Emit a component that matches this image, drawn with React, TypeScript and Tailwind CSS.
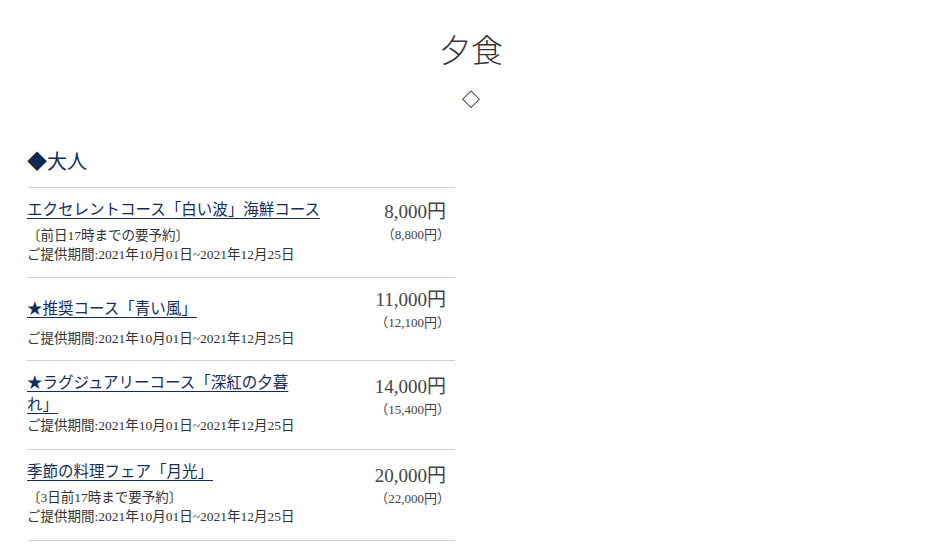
import React from "react";

type Course = {
  title: React.ReactNode;
  note?: string;
  price: string;
  taxed: string;
  pad: string;
  periodGap: string;
  priceGap: string;
};

const courses: Course[] = [
  {
    title: "エクセレントコース「白い波」海鮮コース",
    note: "〔前日17時までの要予約〕",
    price: "8,000",
    taxed: "8,800",
    pad: "pt-[11px] pb-[13px]",
    periodGap: "",
    priceGap: "mt-0",
  },
  {
    title: "★推奨コース「青い風」",
    price: "11,000",
    taxed: "12,100",
    pad: "pt-[20px] pb-[12px]",
    periodGap: "mt-[9px]",
    priceGap: "-mt-[11px]",
  },
  {
    title: (
      <>
        ★ラグジュアリーコース「深紅の夕暮
        <br />
        れ」
      </>
    ),
    price: "14,000",
    taxed: "15,400",
    pad: "pt-[11px] pb-[14px]",
    periodGap: "",
    priceGap: "mt-[2px]",
  },
  {
    title: "季節の料理フェア「月光」",
    note: "〔3日前17時まで要予約〕",
    price: "20,000",
    taxed: "22,000",
    pad: "pt-[11px] pb-[14px]",
    periodGap: "",
    priceGap: "mt-[2px]",
  },
];

const period = "ご提供期間:2021年10月01日~2021年12月25日";

export default function App() {
  return (
    <div
      className="min-h-[558px] bg-white text-[#333]"
      style={{ fontFamily: '"Liberation Serif", "Noto Sans CJK JP", serif' }}
    >
      <div className="pt-[27px] flex flex-col items-center">
        <h1 className="text-[32px] leading-[48px] font-light text-[#333]">夕食</h1>
        <div className="mt-[12px] text-[18px] leading-[27px] text-black">◇</div>
      </div>

      <div className="w-[428px] ml-[27px] mt-[33px]">
        <h2 className="text-[20px] leading-[30px] text-[#0f2a52] mb-[10px]">◆大人</h2>

        <ul className="border-b border-[#d0d0d0]">
          {courses.map((c, i) => (
            <li key={i} className={`flex justify-between border-t border-[#d0d0d0] ${c.pad}`}>
              <div className="w-[300px]">
                <div className="text-[15.5px] leading-[22px] whitespace-nowrap">
                  <a href="#" className="text-[#142c5a] underline underline-offset-[3px]">
                    {c.title}
                  </a>
                </div>
                {c.note && (
                  <p className="mt-[5px] text-[13.5px] leading-[19px] text-[#333]">{c.note}</p>
                )}
                <p className={`text-[13.5px] leading-[19px] text-[#333] ${c.periodGap}`}>
                  {period}
                </p>
              </div>
              <div className={`pr-[9px] text-right ${c.priceGap}`}>
                <div className="text-[19px] leading-[26px] text-[#444]">{c.price}円</div>
                <div className="-mr-[4px] text-[13px] leading-[20px] text-[#444]">（{c.taxed}円）</div>
              </div>
            </li>
          ))}
        </ul>
      </div>
    </div>
  );
}
